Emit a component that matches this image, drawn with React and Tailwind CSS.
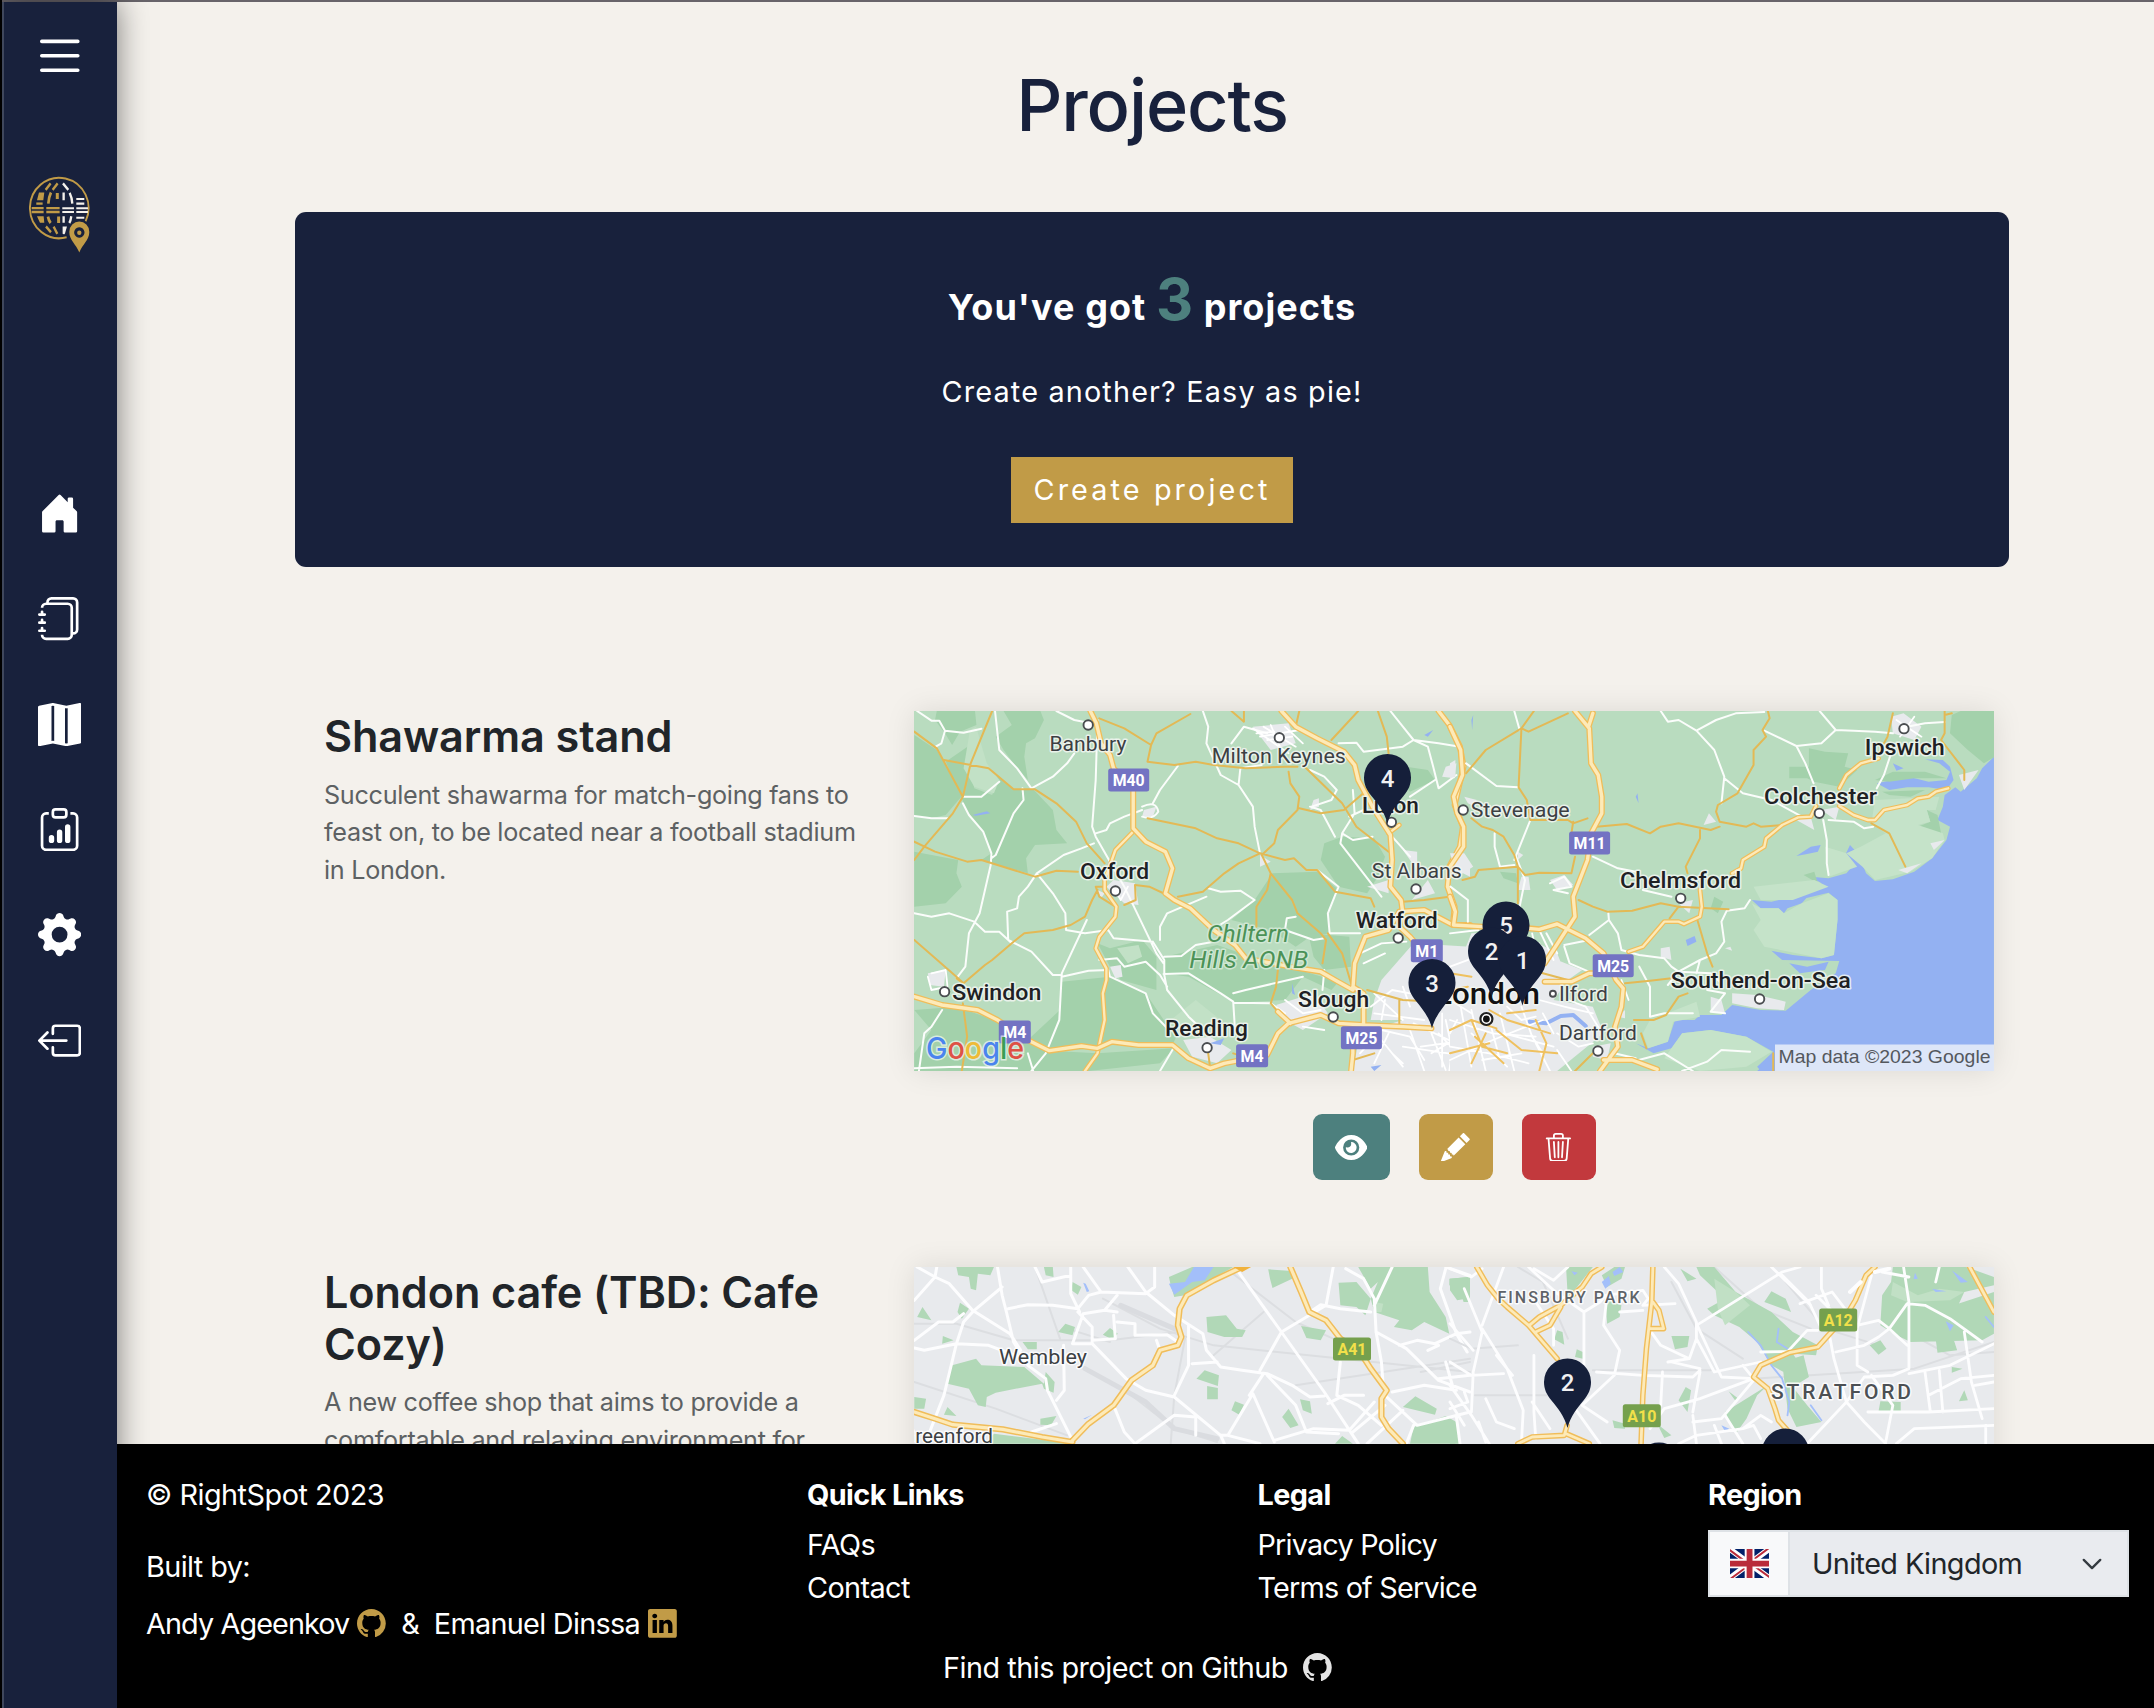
import React from "react";
import {
  BsList,
  BsHouseDoorFill,
  BsJournals,
  BsMapFill,
  BsClipboardData,
  BsGearFill,
  BsBoxArrowLeft,
  BsPencilFill,
  BsTrash3,
  BsGithub,
  BsLinkedin,
} from "react-icons/bs";
import { FaEye } from "react-icons/fa6";

const NAV = [BsHouseDoorFill, BsJournals, BsMapFill, BsClipboardData, BsGearFill, BsBoxArrowLeft];

function Logo() {
  return (
    <svg className="h-[78px] w-[62px]" viewBox="28.7 175 62 78" fill="none">
      <g transform="scale(.33333 .3827)" strokeLinecap="butt">
        <path d="M199 620A88 79 0 1 1 256 578" stroke="#c19b47" strokeWidth="5.5" />
        <g stroke="#c19b47" strokeWidth="6">
          <path d="M94 544H130M94 554H130M138 544H178M138 554H178" />
          <path d="M108 532H127" />
          <path d="M136 496L151 479M157 496L172 479M137 592L152 607M160 592L171 611" strokeWidth="7" />
          <path d="M144 532Q145 516 152 503M143 566Q145 576 151 583" strokeWidth="8" />
          <path d="M171 504V520M175 566V583" strokeWidth="9" />
        </g>
        <path d="M116 503h16l-3 20h-19zM110 565h20l2 17h-13z" fill="#c19b47" />
        <g stroke="#f4f1ec" strokeWidth="7">
          <path d="M186 544H221M186 554H221M228 544H263M228 554H263M228 532H252M228 520H252M228 569H252" strokeWidth="5.5" />
          <path d="M188 479L204 496M190 503V523M208 504Q215 516 216 532M190 565V582M213 565Q211 577 207 583" />
        </g>
        <path d="M187 592h13l-6 18q-3 4-7 1z" fill="#f4f1ec" />
        <path fillRule="evenodd" fill="#c19b47" d="M237 660C228 638 207 628 207 606A30 27 0 0 1 267 606C267 628 246 638 237 660ZM237 594a15.500 13.500 0 1 0 .1 0Z" />
        <ellipse cx="237" cy="608" rx="6.500" ry="6" fill="#c19b47" />
      </g>
    </svg>
  );
}

function Label({ x, y, w, size = 20.5, weight = 400, color = "#3c4043", halo = "#f2f6f2", italic, spaced, children }) {
  return (
    <text
      x={x}
      y={y}
      textAnchor="middle"
      textLength={w}
      lengthAdjust={spaced ? "spacing" : "spacingAndGlyphs"}
      fontFamily="Roboto, sans-serif"
      fontSize={size}
      fontWeight={weight}
      fontStyle={italic ? "italic" : "normal"}
      fill={color}
      stroke={halo}
      strokeWidth="3"
      strokeOpacity=".85"
      strokeLinejoin="round"
      paintOrder="stroke"
    >
      {children}
    </text>
  );
}

function City(props) {
  return <Label size={21.3} weight={500} color="#202124" {...props} />;
}

function Shield({ x, y, w = 41, fill = "#7373c3", color = "#fff", children }) {
  return (
    <g>
      <rect x={x - w / 2} y={y - 11.5} width={w} height="23" rx="2.500" fill={fill} />
      <text x={x} y={y + 5.8} textAnchor="middle" textLength={w - 9} lengthAdjust="spacingAndGlyphs" fontFamily="Roboto, sans-serif" fontSize="16.500" fontWeight="700" fill={color}>
        {children}
      </text>
    </g>
  );
}

function Pin({ x, y, children }) {
  return (
    <g transform={`translate(${x} ${y})`}>
      <path d="M0 0C-3 -12 -10 -20 -16 -27.500C-21 -33.500 -23.500 -39 -23.500 -46A23.500 23.500 0 0 1 23.500 -46C23.500 -39 21 -33.500 16 -27.500C10 -20 3 -12 0 0Z" fill="#151f3a" />
      <text x="0" y="-37" textAnchor="middle" fontFamily="Roboto, sans-serif" fontSize="24" fontWeight="500" fill="#f1f1f3">
        {children}
      </text>
    </g>
  );
}

function Town({ x, y, r = 4.7 }) {
  return <circle cx={x} cy={y} r={r} fill="#fff" stroke="#4a4d50" strokeWidth="1.900" />;
}

function Roads({ d, color, width }) {
  return <path d={d} stroke={color} strokeWidth={width} fill="none" strokeLinejoin="round" strokeLinecap="round" vectorEffect="non-scaling-stroke" />;
}

function Motorway({ d, wide = 6, narrow = 3.4 }) {
  return (
    <>
      <Roads d={d} color="#f0bd5a" width={wide} />
      <Roads d={d} color="#fdeab8" width={narrow} />
    </>
  );
}

const WEST = "translate(-4 -11) scale(.357143 .333333)";
const EAST = "translate(536 -11) scale(.357143 .333333)";

const W_WHITE =
  "M20 33L60 62L82 62L98 92L88 130L72 140M98 92L150 98L200 86M238 33L250 150L300 205L340 265L400 230L440 190L460 160M148 290H200L250 245M12 348L60 355H105M148 310L165 345L205 395L228 460L226 495L195 640L165 700L155 800L130 835M315 265L318 300L290 340L240 465L228 475M525 60L520 240L510 380L520 410L600 560L690 760L710 790M520 400L550 390L560 370L600 350L650 330M750 198L700 270L680 310M650 320Q690 300 695 335Q680 360 650 350M515 430L480 445L430 465L355 520L330 560L305 590L300 625L272 635L275 720L340 755L400 825L420 825M355 520L400 580L435 640L437 690L490 700L555 690L570 715L680 725M410 33L460 60L485 65M820 33L835 80L830 130L870 225L920 255L960 320L965 380L980 460M920 255L925 205L985 195M900 130L935 80L1000 100M495 660L425 820L418 960L380 1060L340 1113M12 640L60 650L110 640L180 665L210 695L250 695L285 730M425 830L500 812L555 810L560 830L660 880L680 940L725 990M530 780L580 775L600 800L660 785L700 825L720 860M680 725L712 780V825L720 870L780 950L810 980M712 770L760 768L800 735L850 725M700 720V680L720 640L830 590M710 822L780 820L870 880L905 905L910 990M905 880L940 870L1060 840L1100 830M905 908L1010 910L1050 940M835 565L870 575L925 572L965 600L890 660L860 680M90 930L60 980L40 1000L25 1113M12 1105L130 1100L300 1105M330 1060L345 1113M1345 33L1380 80L1410 120L1450 140L1465 200L1480 265L1530 225M1200 130L1250 128L1270 155L1380 140L1410 120L1480 130L1540 140M1120 210L1160 230L1195 270L1180 300L1125 320M1240 270L1245 340L1210 400L1240 420L1295 410M1210 400L1205 430L1320 590M1190 410L1150 330L1120 320M1140 510L1200 560L1170 640L1175 700L1260 700M1350 410L1400 470M1080 650L1055 655L1050 690L1130 720L1160 715M1160 810L1155 870M1230 350L1270 330M1470 240L1400 290M740 1040L700 1113";
const W_YELLOW =
  "M230 33L170 190L148 290M12 95L75 145L148 290L120 340L40 440L12 480M95 180L220 205L290 268H350L410 310L465 365L495 430L545 490M12 425L70 455L160 485L200 480L350 530L410 512L470 515M530 55L600 85L675 135L690 100L785 42M675 135L665 185L740 195L800 185L850 195L940 205L1050 200L1085 200M665 355L800 385L860 415L920 430L980 460L1050 480L1075 475L1110 510L1140 510L1190 575L1290 595L1300 620M980 460L920 490L880 520L820 575L750 590M545 560L520 560L530 590L575 620M630 555L670 560L720 585M630 555L632 600L600 615M12 720L130 830L150 850L210 795L230 780L290 725L320 700L400 690L450 675L490 650L510 600L525 570M148 910L160 1010L145 1113M150 850L130 835M1100 195L1210 310L1250 380L1340 455M1060 215L1065 250L1090 290L1085 330L1030 390L1020 430L985 465L1010 520L1000 570L970 620V680M1010 520L1070 600L1085 640L1150 700L1165 720L1155 790M1090 325L1150 340L1215 330L1290 260M1255 33L1180 120M1310 33L1335 110L1340 160M1090 33L1080 80M900 33L935 65V33M1030 810L1025 860L1010 910L1050 960M1280 870L1380 900L1470 905M1370 900V980M1170 700L1210 760L1235 850M1380 605L1440 600L1510 590M1240 1080L1300 1060M835 1060L840 1100M905 1060L935 1070";
const W_MOTOR =
  "M505 33L522 70L535 130L560 165L570 205L625 270V385L660 425L715 455L735 505L715 580L740 600L785 625L825 665L850 690L910 735L940 775L1090 805L1150 815L1190 840L1240 870M1040 33L1080 80L1140 115L1215 155L1245 195L1255 240L1300 330L1345 405L1350 480L1345 560L1375 600L1380 640L1370 680L1400 710L1440 760M1480 33L1510 75L1540 140L1550 200L1525 315L1548 380L1540 440L1510 500L1505 560L1525 620L1520 675L1440 630L1370 635M1240 870L1245 790L1275 710L1340 690L1370 635M1240 860L1270 880V980M12 890L90 915L190 930L245 960L330 1020L390 1052L480 1038L525 1045L565 1025L640 1035L735 1035L780 1075L840 1105L880 1090L1000 1065L1030 1000L1060 970L1150 945L1200 970L1270 975L1380 980L1460 985M1030 935L1065 970M1240 1010V1060L1235 1113M1520 675H1568";
const W_MID = "M625 395L575 450L562 490L545 540L545 570L578 620L575 650L530 710L520 745L550 805V840L540 880L545 960L525 1060L490 1113M1340 400L1370 375";
const W_STREETS =
  "M960 85L1060 160M980 110L1090 90M1010 75L1040 150M990 80L1080 140M1000 120L1070 110M970 100L1020 95M1050 80L1100 130M1260 760L1320 730L1390 725M1270 790L1330 760M1300 880L1380 960M1290 920L1350 870L1400 880M1330 900L1320 960M1380 860L1400 920M1300 940L1440 960M1260 1060L1320 990L1400 1010L1440 1080M1320 1020L1380 1100M1340 1000L1300 1090M1400 990L1440 1113M1460 1000L1500 1110M1480 1000L1568 1100M1500 960L1520 1060L1568 1080M1568 990L1460 1060M1430 1040L1568 1020M1530 960L1510 1113M1380 1040L1568 1070M1050 900L1100 940L1150 930M1100 980L1160 990M60 820L100 810L105 860L60 870L50 830M570 560L590 600L610 560M1350 1060L1380 1090M1410 970L1568 1050M1490 940V1100M1540 930L1560 1100";

const E_WHITE =
  "M180 33L195 90M45 190L130 258L190 262M225 360L195 440L180 480M125 400V440L140 500L180 495M185 470L210 540L195 620M400 470L470 505L520 515M590 33L610 65L640 60L690 92L745 60L800 40L880 36M690 92L740 150L768 230L760 310M768 235L820 280L900 300L985 350M1035 33L1080 90L1130 92L1190 95L1240 100M1080 90L1040 130L970 138L880 92M970 138L995 190L1018 250M1195 265L1215 225L1235 160M1280 80L1330 70L1385 66M1045 360L1055 420V490L1060 525M1060 360L1130 365L1160 385L1185 380M540 570L620 590M840 600L825 625L775 632L760 665L768 725L745 760L700 780L640 815L610 855M700 780L690 820M443 635L445 660L470 700L480 750L530 765L600 775L620 800L640 815L730 820L760 850M445 660L390 705M320 740L335 790L400 820M530 800L560 860V950M560 950L600 940H680M720 870L770 880L730 935L770 940M1 560L50 600V665M280 550L320 530L340 560L290 570L330 580M390 720L320 735M510 1085L600 1060L680 1113M840 1055L760 1050L720 1085L650 1113M460 1060L520 1075M250 730L230 800M270 700L300 760";
const E_YELLOW =
  "M235 33L200 85L220 95L330 40M200 85L100 150L45 220M200 85L192 262L215 300L225 360M60 355L90 380L120 390L150 410L180 465L190 500L80 510L70 530L35 540M190 500L190 610M190 500L210 525L250 518L340 520L350 470M225 360H330L345 370L385 355M345 365L340 400M410 380L495 372L560 400L590 380L640 370L730 390L755 380M745 335L755 365L830 380L850 370L870 380L930 375M890 33L895 55L875 90L885 110L850 150V195L805 280L750 315L745 335M700 390V415L660 500L665 520M360 600L400 620L440 635L510 632L590 610L640 620L780 628M640 620L615 655M690 650L720 760L735 800M1180 370L1230 400L1275 500M1240 40L1225 110L1200 160M1385 33V100L1375 120L1440 210V240M1405 40L1385 45M490 850L560 842L620 835M665 880L640 890L605 945L570 960L515 960M535 1000L550 1045M220 800L260 820L330 840M905 1060V1113M400 1060L350 1113";
const E_MOTOR =
  "M350 33L390 85L395 190L415 225L425 290V340L395 400L385 480L345 590L350 650L265 790M400 40L388 80M0 80L30 150L35 225L10 290L20 340L38 380V440L0 500M0 590L15 635L10 675L90 680M220 685L250 688L300 672L380 715L430 760L465 840L485 865L480 920L462 980M462 980L470 1040L420 1113M430 1080H510L580 1108M265 845L340 845L390 820L420 820";
const E_MID =
  "M500 755L540 740L600 665H640L655 672L700 650L705 620L700 570M790 520L815 505L820 480L880 440L885 415L930 375L975 352L1010 350L1025 318M1090 265L1110 225L1150 190L1200 175M1090 318L1130 345L1170 360H1190L1215 330L1280 315L1310 295L1340 290L1360 275L1395 265";
const E_STREETS =
  "M0 700L80 690M0 800L100 760M230 700L250 800M250 690L290 780M0 900L60 940M0 960L120 1000L240 1010M30 920L60 1100M60 930L100 1113M0 1040L110 1060L220 1090M110 960L140 1080M140 940L180 1113M0 1080L120 1020L260 960M200 920L230 1010L260 1060M150 1000L290 1040M60 1000L160 1100M250 900L320 920L400 940M260 940L290 1000M330 900L380 920L420 990M300 1000L360 1040L400 1030M300 1050L340 1113M240 1030L280 1113M20 960L0 1000M160 920L200 960L240 950M90 1080L200 1060M1250 60L1320 110M1260 110L1300 50M480 840L500 900";

function BritainMap() {
  return (
    <svg className="block h-full w-full" viewBox="0 0 1080 360">
      <rect width="1080" height="360" fill="#b9dcbf" />
      <g transform={WEST}>
        <g fill="#a3d1ab">
          <path d="M75 33H182L186 75L140 95L118 135L98 100L70 60Z" />
          <path d="M12 105L75 150L148 285L100 345L60 355L12 350Z" />
          <path d="M100 185L175 130L165 190L180 265L230 285L245 245L220 205L290 268H345L400 330L410 390L440 430L350 435L325 475L330 520L200 480L228 460L205 395L165 345Z" />
          <path d="M262 33H365L375 60L350 115L325 130L320 170L330 240L290 190L262 150L240 110L285 75Z" />
          <path d="M12 455L135 480L130 520L145 560L100 610L12 620Z" />
          <path d="M425 845L560 830L660 880L720 975L750 1000L735 1035L560 1025L525 1045L400 1052L330 1020L420 930Z" />
          <path d="M12 930L130 920L250 965L390 1052L525 1060L740 1045L700 1090L500 1113H12V1060L60 990Z" />
          <path d="M712 770L860 735L980 780L1090 810L1200 845L1180 870L1100 830L1050 900L910 908L780 830L712 820Z" />
          <path d="M965 600L1015 520L1140 515L1200 570L1170 640L1175 700L1120 710L1080 740L1010 690L900 660Z" />
          <path d="M525 730L560 745L650 720L690 770V870L590 840L560 800Z" />
          <path d="M1160 430L1210 410L1300 415L1330 470L1310 530L1280 580L1200 560L1150 480Z" />
          <path d="M1390 200L1450 210L1470 240L1400 275L1380 250Z" />
          <path d="M1115 700L1230 710L1235 800L1160 810L1130 770Z" />
        </g>
        <g fill="#c2e1c6">
          <path d="M168 90L185 80L215 190L250 240L235 280L180 260L150 205Z" />
          <path d="M580 745L640 735L650 770L610 790ZM730 960L800 900L870 960L800 1000Z" />
        </g>
        <g fill="#e8eaed">
          <path d="M570 540L630 550L640 615L600 610L550 560ZM525 570L545 580L535 595Z" />
          <path d="M960 80L1060 70L1080 130L1010 150ZM1500 200L1530 190L1525 235L1490 230Z" />
          <path d="M1320 840L1410 730L1568 740V1113H1240L1260 1000L1380 960L1290 960L1300 900Z" />
          <path d="M1380 450L1420 455V510ZM1280 560L1340 540V580ZM1405 600L1450 540L1470 580ZM1025 915L1130 880L1170 940L1100 990L1050 960ZM765 1020L840 1010L900 1050L860 1090L790 1070ZM50 820L100 810L95 860L55 855ZM560 800L590 795L595 830L575 835ZM655 330L690 320L680 350L650 350ZM980 465L1010 485L980 500ZM1130 300L1145 295V320L1120 330ZM1540 460L1568 500V530L1530 510Z" />
        </g>
        <g fill="#93b1f2">
          <path d="M175 345L215 334L225 340L185 347ZM1440 105L1465 90L1450 110ZM840 1030L880 1015L870 1035ZM1290 1100L1320 1095L1300 1113ZM1070 850L1078 885L1070 880Z" />
        </g>
        <Roads d={W_WHITE} color="#fbfdfb" width="2" />
        <Roads d={W_STREETS} color="#fff" width="1.800" />
        <Roads d={W_YELLOW} color="#e3b955" width="2" />
        <Motorway d={W_MID} wide={4.8} narrow={2.4} />
        <Motorway d={W_MOTOR} />
      </g>
      <g transform={EAST}>
        <g fill="#93b1f2">
          <path d="M1523 170L1490 205L1475 235L1430 275L1415 262L1385 285L1380 320L1365 360L1400 380L1390 420L1350 475L1300 515L1240 538L1190 543L1165 520L1150 480L1130 495L1110 520L1060 535L1010 530L1040 550L1010 575L960 585L975 600L1060 578L1085 600V660L1075 765L1040 775L960 765L900 752L930 780L1090 783L1080 820L1010 870L940 932L870 930L790 915L760 945L700 945L685 960H630L610 1025L555 1045L520 1030L570 1060L620 1045L650 1000L730 990L830 1010L905 1055L860 1100L870 1113H1523Z" />
          <path d="M1195 250L1240 240L1290 232L1340 245L1390 240L1400 215L1370 190L1330 178L1380 180L1400 200L1410 240L1390 270L1340 262L1280 262L1230 270Z" />
          <path d="M845 600L900 605L960 590L1010 580L985 610L945 625L935 640L920 625L870 625ZM970 468L1010 440L1038 435L1030 455L1000 462ZM1060 485L1100 480L1120 435L1150 470L1135 500L1110 490ZM660 720L685 708L690 725L665 738ZM520 290L525 280L528 310ZM60 60L65 45L62 90ZM1425 40L1445 75L1435 80ZM1240 190L1270 205L1250 212ZM222 960L270 965L310 945L345 942L385 975L375 985L330 958L300 975L250 980ZM950 790L1000 800L1060 785L1050 810L1010 815L980 820ZM860 1113L900 1075L920 1113Z" />
        </g>
        <g fill="#a3d1ab">
          <path d="M1405 45L1430 33H1523V172L1495 190L1450 150L1400 100Z" />
          <path d="M1005 145L1050 155L1115 160L1105 200L1140 210L1090 260L1020 245L1000 235L950 235V200L1005 200Z" />
          <path d="M1190 240L1240 215L1330 215L1390 235L1300 235L1230 245ZM1210 275L1330 270L1290 290L1230 285ZM1335 330L1365 345L1375 400L1310 380L1345 365ZM740 590L765 605L750 640L730 625ZM140 515L185 520L190 550L150 535ZM990 525L1020 515L1030 550ZM640 1010L665 1020L645 1040Z" />
        </g>
        <g fill="#c5e3c9">
          <path d="M1190 300L1370 290L1360 330L1335 330L1345 365L1310 375L1380 400L1385 420L1350 475L1290 515L1190 540L1155 500L1110 460L1150 440L1220 400L1180 370Z" />
          <path d="M845 610L870 625L920 625L935 640L985 610L1060 580L1085 600V660L1075 765L1040 775L880 740L850 690L870 660ZM625 965L700 950L690 905L560 960L540 1000L555 1045L610 1025ZM650 1000L730 990L830 1010L900 1055L830 1100L700 1113L600 1075Z" />
          <path d="M850 560L1020 540L1060 560L960 600L870 600ZM1050 440L1110 460L1140 500L1060 530Z" />
        </g>
        <g fill="#e8eaed">
          <path d="M0 860L60 700L130 700L230 720L300 760L330 840L290 900L400 920L430 1000L300 1113H0ZM260 800L300 780L370 810L330 840ZM0 460L40 460L65 500L20 530ZM0 190L15 180V230L0 235Z" />
          <path d="M790 880L860 885L940 905L935 930L860 925L790 910ZM730 890L760 900L770 940L730 935ZM970 360L1010 350L1020 390ZM1040 330L1090 320L1080 360ZM1235 50L1270 40L1320 80L1300 120L1240 100ZM1425 225L1480 210L1440 270ZM1345 430L1385 420L1355 450ZM1255 510L1320 490L1280 520ZM725 340L745 365L710 375ZM190 455L205 465L190 480ZM200 530L220 530L225 570L190 570ZM590 745L615 740L620 780L590 770ZM770 745L785 740L790 752ZM640 610L680 600L670 640ZM280 540L320 525L345 555L300 570ZM470 950L490 930V955ZM400 1040L450 1030L440 1080L400 1070ZM40 290L75 300L70 320L50 310Z" />
        </g>
        <Roads d="M222 965L270 970L310 948L345 945L380 978" color="#93b1f2" width="4" />
        <Roads d={E_WHITE} color="#fbfdfb" width="2" />
        <Roads d={E_STREETS} color="#fff" width="1.800" />
        <Roads d={E_YELLOW} color="#e3b955" width="2" />
        <Roads d="M0 820L60 830M0 870L50 860M0 990L60 960L130 985M60 960L90 1040L160 1060M0 1060L110 1030M110 930L160 960L280 1000M240 960L270 1030L250 1113M160 940L240 930M100 1000L60 1090M130 990L200 1050L300 1060M70 1010L150 1090" color="#efc15f" width="2" />
        <Motorway d={E_MID} wide={4.800} narrow={2.400} />
        <Motorway d={E_MOTOR} />
      </g>

      <Town x={174.200} y={14} />
      <Town x={365.300} y={26.700} />
      <Town x={477.400} y={111.300} />
      <Town x={201.400} y={180} />
      <Town x={502} y={178} />
      <Town x={484.200} y={227} />
      <Town x={30.600} y={280.700} />
      <Town x={419.200} y={306} />
      <Town x={293.100} y={336.700} />
      <Town x={549.200} y={99} />
      <Town x={990} y={17.700} />
      <Town x={905.300} y={102.300} />
      <Town x={766.700} y={187.300} />
      <Town x={845.600} y={288} />
      <Town x={683.900} y={340} />
      <Town x={638.900} y={282.700} r={3} />
      <circle cx="572.400" cy="308" r="6" fill="#fff" stroke="#222" strokeWidth="2.200" />
      <circle cx="572.400" cy="308" r="3.400" fill="#111" />

      <Shield x={214.700} y={69}>M40</Shield>
      <Shield x={100.800} y={321} w={32}>M4</Shield>
      <Shield x={338.100} y={344.700} w={32}>M4</Shield>
      <Shield x={447.400} y={326.700}>M25</Shield>
      <Shield x={512.800} y={239.700} w={32}>M1</Shield>
      <Shield x={675.600} y={132}>M11</Shield>
      <Shield x={699.200} y={254.700}>M25</Shield>

      <Label x={173.900} y={39.500} w={77}>Banbury</Label>
      <Label x={364.800} y={52.300} w={134}>Milton Keynes</Label>
      <City x={476.400} y={101.700} w={57}>Luton</City>
      <City x={200.600} y={168.300} w={69}>Oxford</City>
      <Label x={502.800} y={167.300} w={90}>St Albans</Label>
      <City x={482.800} y={216.700} w={82}>Watford</City>
      <Label x={334} y={230.700} w={82} size={24} italic color="#4b9257" halo="#d5ead8">Chiltern</Label>
      <Label x={334.700} y={256.700} w={119} size={24} italic color="#4b9257" halo="#d5ead8">Hills AONB</Label>
      <City x={82.800} y={288.500} w={89}>Swindon</City>
      <City x={419.600} y={295.700} w={71}>Slough</City>
      <City x={292.400} y={324.500} w={83}>Reading</City>
      <City x={990.800} y={43.700} w={80}>Ipswich</City>
      <City x={906.500} y={92.500} w={113}>Colchester</City>
      <Label x={606.200} y={105.500} w={99}>Stevenage</Label>
      <City x={766.500} y={177.300} w={121}>Chelmsford</City>
      <City x={846.700} y={277} w={180}>Southend-on-Sea</City>
      <Label x={669.400} y={289.500} w={49}>Ilford</Label>
      <Label x={683.900} y={329} w={78}>Dartford</Label>
      <Label x={573.500} y={293} w={105} size={29} weight={500} color="#111">London</Label>

      <Pin x={592} y={260}>5</Pin>
      <Pin x={577.500} y={286}>2</Pin>
      <Pin x={608.500} y={294.500}>1</Pin>
      <Pin x={473.500} y={112.500}>4</Pin>
      <Pin x={518} y={317.500}>3</Pin>

      <text x="12" y="347.500" textLength="98" lengthAdjust="spacingAndGlyphs" fontFamily="Inter, sans-serif" fontSize="30" fontWeight="500" stroke="#fff" strokeWidth="3" strokeOpacity=".6" paintOrder="stroke">
        <tspan fill="#4a84ee">G</tspan>
        <tspan fill="#de5246">o</tspan>
        <tspan fill="#eebb36">o</tspan>
        <tspan fill="#4a84ee">g</tspan>
        <tspan fill="#3a9e55">l</tspan>
        <tspan fill="#de5246">e</tspan>
      </text>
      <rect x="861" y="333.500" width="219" height="26.500" fill="#f5f7fa" fillOpacity=".76" />
      <text x="864.500" y="352" textLength="212" lengthAdjust="spacingAndGlyphs" fontFamily="Liberation Sans, sans-serif" fontSize="19" fill="#54585e">
        Map data ©2023 Google
      </text>
    </svg>
  );
}

const CITY_W = "translate(-4 -5) scale(.357143 .333333)";
const CITY_E = "translate(536 -5) scale(.357143 .333333)";

function CityMap() {
  return (
    <svg className="block h-full w-full" viewBox="0 0 1080 360">
      <rect width="1080" height="360" fill="#e8eaed" />
      <g transform={CITY_W}>
        <Roads d="M12 185L130 185L290 235L560 235L750 210M350 15L420 230M540 110L700 200L850 250L1568 330M480 310L620 400L740 500L860 540M12 360L240 440L440 520M880 15L1080 180L1185 230M740 400L730 545M770 230L740 400M1080 370L1568 290M990 150L850 280M440 200L560 240M1430 330L1568 300" color="#dcdee1" width="2" />
        <Roads d="M490 320L660 420L740 500L860 530M590 130L740 200" color="#dadce0" width="5" />
        <g fill="#b1d8b7">
          <path d="M130 15H235L225 40L190 35L185 85L170 80L165 45L135 40ZM375 15H400L402 45L380 40ZM455 60L480 75L470 98L452 85ZM140 122L165 140L145 170L133 150ZM35 135L60 175L20 165ZM92 222L122 235L90 245ZM315 240H355V262H330ZM435 185L462 195L455 220L415 210ZM560 198L582 215L565 232L540 218Z" />
          <path d="M118 310L185 290L200 310L320 315L375 365L380 330L405 360L402 392L375 380L370 365L240 392L215 405L212 435L190 430L165 380L105 365Z" />
          <path d="M365 470L410 462L395 490L365 488ZM105 435L130 462L95 458ZM12 405L45 410L40 440H12ZM235 515L460 545H210Z" />
          <path d="M830 165L885 160L915 200L940 205L930 225L880 225L833 210ZM825 325L865 340L862 372L802 350ZM832 372L862 378V412H832ZM910 418L935 428L922 458L900 445ZM1060 440L1088 490L1065 498L1042 465ZM1092 412L1120 418L1125 455L1100 445ZM1095 192L1165 205L1150 235L1110 228Z" />
          <path d="M1003 22L1078 28L1070 50L1015 78L1008 50ZM725 45L790 15H905L770 100L740 105L730 70ZM1200 62L1250 60L1290 110L1275 160L1250 135L1205 130ZM1345 15H1450L1455 90L1500 165L1510 215L1440 180L1405 205L1355 195L1370 175L1300 150L1290 110L1310 60ZM1255 15H1345L1310 60L1290 80ZM1510 50L1568 45V120L1550 120L1540 85L1510 70ZM1415 403L1475 440L1470 458L1380 435ZM1400 545L1410 495L1500 462L1530 480L1540 545ZM1210 522L1240 545H1190Z" />
        </g>
        <path d="M1300 120L1325 125L1320 150L1300 150Z" fill="#c1e0c5" />
        <g fill="#a3bffa">
          <path d="M795 15H850L825 55L790 60L740 98L725 65L770 60ZM485 62L492 65L502 88L495 90ZM485 470L510 458L490 472Z" />
        </g>
        <Roads d="M20 15L70 45L110 65L175 145L280 215L310 265M75 15L70 45L12 115M245 15L258 100L270 150L290 240L330 310L380 350L385 385L455 535M12 235L80 180L120 180L150 155M258 75L180 145L150 180L130 245L95 400L55 510M12 258L40 265L130 245L220 250L320 290M275 140L330 128L400 130L470 140L500 100L535 90L660 95L685 75V15M450 15V95L475 150M350 15L370 60L450 40M485 15L535 90M610 15L660 90L740 160L820 215L830 265L870 315L930 325L1000 335L1070 370L1120 405L1160 402M580 100L545 145L485 155L455 245L510 245L605 350L660 385L740 405L870 520L880 545M470 150L510 195V245M545 145L580 150M570 160L575 230L510 235M580 180L630 185V220L720 218L750 240M690 235L700 265M430 250L432 385L410 415M780 190V310L740 400M790 305L860 300M910 15L1040 210L1160 390L1255 545M1185 15L1165 130L1040 210L980 325M1205 300L1195 400L1255 430L1320 490M1120 150L1150 128L1205 140L1290 150M1220 20L1270 50L1300 110L1305 210L1320 300L1325 370M1350 15L1300 130M1305 210L1390 260L1480 355L1568 390M1370 250L1420 235L1470 245L1530 215L1568 210M1480 250L1450 265M1500 20L1485 80L1530 215L1560 270M1480 350L1568 340M1520 375L1500 300M570 430L600 510L630 545L740 460L800 465L800 520M870 520L890 520L960 395L1020 540M890 520L980 545M990 335L950 400M1000 340L1080 430L1110 510L1200 515M1020 535L1130 500L1230 505L1300 420M1170 425L1215 400L1270 400M1240 510L1330 430M1280 545L1380 445M1330 400L1420 490L1568 450M1390 545L1410 490M1530 465L1540 545M1350 390L1440 370L1530 385M410 485L340 510M1500 15L1568 40" color="#fdfdfe" width="3" />
        <Motorway d="M12 450L70 470L120 488L260 502L370 525L455 540M455 535L500 485L570 430L620 355L680 310L700 265L750 250L760 225L750 190L755 140L775 100L850 55L930 15M1065 15L1095 90L1118 150L1165 175L1205 230L1260 270L1290 320L1335 385L1320 410V465L1340 500L1380 545" wide={6.200} narrow={3.200} />
        <path d="M905 15H955L930 30Z" fill="#f1b23c" />
      </g>
      <g transform={CITY_E}>
        <Roads d="M740 15L870 140L1010 200M400 325L730 325M850 350L1300 320L1523 240M190 15L260 60L330 230M620 60L690 200L820 290M0 230L60 260L190 250M70 400L270 400M940 60L1050 200L1200 250M1280 210L1400 280L1523 270" color="#dcdee1" width="2" />
        <g fill="#b1d8b7">
          <path d="M0 50L50 45L45 110L20 115L0 85ZM325 15H400L330 110ZM435 110L480 130L475 165L440 185ZM300 205L315 210L320 248L292 232ZM355 262L372 270V290L350 285ZM620 222H670L665 255L630 262ZM645 20L690 50L665 58ZM660 375L675 385L665 450L640 415ZM580 485L620 520L600 528ZM455 475L490 485V500L460 498ZM780 388L808 410L800 418ZM0 470L20 520L15 545H0ZM425 40L460 15H490L480 50L440 75Z" />
          <path d="M690 15H740L800 90L900 150L960 210L1030 250L1025 280L960 275L1000 340L960 345L900 310L860 240L810 195L740 160L720 140L770 110L700 40ZM900 88L940 110L955 150L880 120ZM890 370L860 400L830 470L800 515L770 450ZM930 300L990 280L1005 345L960 375L1000 430L1040 480L970 495L945 440Z" />
          <path d="M1240 15H1445L1523 45V70L1440 90L1410 160L1440 190L1523 200V215L1490 235L1290 240L1250 220L1205 190L1210 100L1235 60ZM1360 232H1410L1420 265L1365 272ZM1205 235L1222 260L1200 278L1175 250ZM1410 130L1523 90V215L1440 200L1410 180ZM1205 418L1262 420V452L1200 448ZM1440 385L1450 415L1425 418ZM1405 315L1435 320L1405 332Z" />
        </g>
        <path d="M740 50L800 90L840 130L770 190L750 140ZM1240 60L1310 100L1370 80L1440 90L1400 115L1280 120L1235 100Z" fill="#c1e0c5" />
        <g fill="#a3bffa">
          <path d="M340 28L358 32L348 40ZM425 60L445 42L450 65L435 80ZM455 30L475 15L485 30L460 42ZM1302 32L1310 50L1298 52ZM1405 25L1450 60L1430 62ZM1350 80L1390 88L1360 90ZM1388 178L1410 190L1400 208ZM760 490L782 500L770 508Z" />
        </g>
        <Roads d="M835 210L870 250L900 310L930 350M920 200L915 240L945 260M930 350L950 420L945 460M1010 430L1040 475M1500 165L1523 195" color="#a3bffa" width="1.800" />
        <Roads d="M0 20L60 45L90 20M40 80L90 210L65 330L60 450M0 185L65 265M90 200L160 320L205 445L200 545M60 340L150 335M130 280L175 340M150 15L90 190M220 15L295 90L375 150V320M235 20L290 55L330 15M240 120L290 200V250M235 280V450L240 530M375 150L420 120L435 100L540 85L555 110L540 130L630 125M440 100L430 190L475 265L460 340L370 430M410 330L540 340L680 345L700 325M475 150L540 145M600 15L640 65L690 180V230L670 290L590 250L560 205M670 290L610 300M690 190L930 30L980 15M690 185L760 345L850 350M690 230L740 330L870 300M930 40L1005 120L1040 200M900 15L1010 130M980 125L1070 90L1120 160M1040 15V80L1060 130M1025 100L1120 200M1180 40L1160 120L1140 200V310L1170 330M1060 205L1075 290L1110 420L1160 480L1220 545M1080 270L1160 250L1200 225L1230 200L1280 125L1330 130L1400 170L1490 240M1270 15L1285 120V320L1240 340L1160 345L1110 420L1000 545M1140 190L1200 175L1230 200L1280 250M1523 245L1400 310L1285 335M1440 210L1460 360L1490 470M1210 30L1285 45M1370 15L1360 60M1330 330L1345 450M1370 325L1380 450M1170 450H1340L1523 440M1180 340L1240 430L1220 540M940 275L1000 205L1030 205M870 270L950 268M820 310L850 350L700 410L600 440L560 500M850 355L760 470L680 480M640 545L690 520L820 500L870 460L900 480M680 460L690 545M740 490L760 545M590 430L595 330M700 330L680 450M620 300L700 320M820 500L850 490L870 530M770 460L820 545M350 440L420 545M370 430L440 480M230 420L280 500M100 410L130 480L180 500M0 370L60 460L110 545M0 420L40 490M40 390L50 420L0 440M80 480L100 540M0 300L60 340M1250 545L1300 500L1523 490M1340 400L1430 350L1523 340M1500 490V545M1523 360L1470 370" color="#fdfdfe" width="2.800" />
        <Motorway d="M75 15L105 70L135 110L160 135L220 190L300 290M425 15L395 35L370 75L310 130L250 165L222 190M310 135L280 190L240 210M568 15L565 120L550 260L540 400L535 545M568 120L585 145L598 200H562M1190 15L1165 40L1135 115L1110 160L1055 225L1030 255L950 272L870 310L850 345L890 380L910 440L920 475L945 505M1455 15L1523 150M328 490L320 520L230 525L190 545M325 515L390 545" wide={5.600} narrow={2.800} />
        <Roads d="M1190 30L1230 20M1120 90L1150 60" color="#fdfdfe" width="4" />
      </g>

      <Shield x={438} y={82} w={38} fill="#75a04d" color="#f2e04a">A41</Shield>
      <Shield x={924.200} y={53} w={38} fill="#75a04d" color="#f2e04a">A12</Shield>
      <Shield x={727.800} y={148.700} w={38} fill="#75a04d" color="#f2e04a">A10</Shield>
      <Label x={129} y={96.700} w={88} size={21} halo="#fff">Wembley</Label>
      <Label x={33} y={176} w={92} size={21} halo="#fff">Greenford</Label>
      <Label x={654.500} y={36} w={142} size={16} color="#5f6368" weight={500} halo="#fff" spaced>FINSBURY PARK</Label>
      <Label x={927} y={131.700} w={140} size={21} color="#4c5054" weight={500} halo="#fff" spaced>STRATFORD</Label>
      <Pin x={745} y={245} />
      <Pin x={653.500} y={161}>2</Pin>
      <Pin x={871.400} y={231}>4</Pin>
    </svg>
  );
}

function UnionJack() {
  return (
    <svg className="h-[29px] w-[39px]" viewBox="0 0 640 480" preserveAspectRatio="none">
      <path fill="#012169" d="M0 0h640v480H0z" />
      <path fill="#fff" d="m75 0 244 181L562 0h78v62L400 241l240 178v61h-80L320 301 81 480H0v-60l239-178L0 64V0z" />
      <path fill="#b92c3a" d="m424 281 216 159v40L369 281zm-184 20 6 35L54 480H0zM640 0v3L391 191l2-44L590 0zM0 0l239 176h-60L0 42z" />
      <path fill="#fff" d="M241 0v480h160V0zM0 160v160h640V160z" />
      <path fill="#b92c3a" d="M0 193v96h640v-96zM273 0v480h96V0z" />
    </svg>
  );
}

function Project({ title, text, map }) {
  return (
    <section className="flex pl-[29px]">
      <div className="w-[590px] shrink-0">
        <h2 className="mb-[13.800px] whitespace-nowrap text-[43.200px] font-[560] leading-[51.840px] tracking-[-0.100px] text-[#212529]">
          {title.map((line) => (
            <span key={line} className="block">{line}</span>
          ))}
        </h2>
        <p className="whitespace-nowrap text-[25.200px] leading-[37.800px] tracking-[-0.290px] text-[#5d6163]">
          {text.map((line) => (
            <span key={line} className="block">{line}</span>
          ))}
        </p>
      </div>
      <div className="w-[1080px] shrink-0">
        <div className="h-[360px] shadow-[0_0_28px_rgba(0,0,0,0.1)]">{map}</div>
        <div className="mt-[43px] flex justify-center gap-[29px]">
          <button className="flex h-[66px] w-[77px] items-center justify-center rounded-[9px] bg-[#4d807e] text-white">
            <FaEye className="h-[29px] w-[32.400px]" />
          </button>
          <button className="flex h-[66px] w-[74px] items-center justify-center rounded-[9px] bg-[#c19b47] text-white">
            <BsPencilFill className="size-[28.800px]" />
          </button>
          <button className="flex h-[66px] w-[74px] items-center justify-center rounded-[9px] bg-[#c2393d] text-white">
            <BsTrash3 className="size-[28.800px]" />
          </button>
        </div>
      </div>
    </section>
  );
}

export default function App() {
  return (
    <div className="flex h-[1708px] w-[2154px] flex-col overflow-hidden border-l-2 border-black bg-[#f4f1ec] font-['Inter',sans-serif]">
      <div className="h-[2px] shrink-0 bg-[#68646a]" />
      <div className="flex min-h-0 flex-1">
        <aside className="relative z-10 flex w-[115px] shrink-0 flex-col items-center border-l-2 border-[#3f475c] bg-[#18213c] pr-[2px] text-white shadow-[0_0_29px_rgba(0,0,0,0.5)]">
          <BsList className="mt-[25px] size-[57.600px]" />
          <div className="mt-[90px]">
            <Logo />
          </div>
          <nav className="mt-[208.500px] flex flex-col items-center">
            {NAV.map((Icon, i) => (
              <a key={i} className="flex h-[105.300px] w-[111px] items-center justify-center">
                <Icon className="size-[43.200px]" />
              </a>
            ))}
          </nav>
        </aside>

        <div className="flex min-w-0 flex-1 flex-col">
          <main className="min-h-0 flex-1 overflow-hidden pl-[178px]">
            <div className="w-[1714px]">
              <h1 className="mt-[60px] text-center text-[72px] font-[540] leading-[86.400px] tracking-[-1.150px] text-[#18213c]">Projects</h1>
              <div className="mt-[63.600px] flex h-[355px] flex-col items-center rounded-[11px] bg-[#18213c] pt-[58.500px] text-white">
                <h3 className="h-[71px] text-[36px] font-bold leading-[69px] tracking-[1.050px]">
                  You've got <span className="text-[57.600px] leading-none text-[#4d807e]">3</span> projects
                </h3>
                <p className="mt-[28.500px] text-[28.800px] leading-[43.200px] tracking-[1.170px]">Create another? Easy as pie!</p>
                <button className="mt-[43.500px] flex h-[66px] w-[282px] items-center justify-center bg-[#c19b47] pb-[1px] text-[28.800px] tracking-[3.100px]">
                  Create project
                </button>
              </div>
              <div className="mt-[144px] flex flex-col gap-[87px]">
                <Project
                  title={["Shawarma stand"]}
                  text={["Succulent shawarma for match-going fans to", "feast on, to be located near a football stadium", "in London."]}
                  map={<BritainMap />}
                />
                <Project
                  title={["London cafe (TBD: Cafe", "Cozy)"]}
                  text={["A new coffee shop that aims to provide a", "comfortable and relaxing environment for"]}
                  map={<CityMap />}
                />
              </div>
            </div>
          </main>

          <footer className="relative z-20 flex h-[264px] shrink-0 flex-col bg-black pl-[29px] pt-[29px] text-[28.800px] leading-[43.200px] tracking-[-0.600px] text-white">
            <div className="flex h-[173px]">
              <div className="w-[661px]">
                <p className="tracking-[-0.500px]">© RightSpot 2023</p>
                <p className="mt-[28.800px]">Built by:</p>
                <p className="mt-[14px] flex items-center whitespace-nowrap tracking-[-0.900px]">
                  Andy Ageenkov
                  <BsGithub className="ml-[8px] size-[28.800px] text-[#c19b47]" />
                  <span className="mx-[15px]">&amp;</span>
                  <span className="tracking-[-0.700px]">Emanuel Dinssa</span>
                  <BsLinkedin className="ml-[8px] size-[28.800px] text-[#c19b47]" />
                </p>
              </div>
              <div className="w-[450.500px]">
                <h4 className="mb-[7px] font-bold">Quick Links</h4>
                <p>FAQs</p>
                <p>Contact</p>
              </div>
              <div className="w-[450.500px] tracking-[-0.800px]">
                <h4 className="mb-[7px] font-bold tracking-[-0.600px]">Legal</h4>
                <p>Privacy Policy</p>
                <p>Terms of Service</p>
              </div>
              <div>
                <h4 className="font-bold">Region</h4>
                <div className="mt-[13.800px] flex h-[67px] w-[421px] border-2 border-[#dee2e6] bg-[#e9ebef] text-[#212529]">
                  <div className="flex w-[80px] items-center justify-center border-r-2 border-[#dee2e6] bg-[#f8f9fa]">
                    <UnionJack />
                  </div>
                  <span className="flex-1 self-center pl-[22px]">United Kingdom</span>
                  <svg className="mr-[24px] w-[22px] self-center" viewBox="0 0 16 16" fill="none" stroke="#343a40" strokeWidth="1.700" strokeLinecap="round" strokeLinejoin="round">
                    <path d="m2 5 6 6 6-6" />
                  </svg>
                </div>
              </div>
            </div>
            <div className="flex items-center pl-[797px] tracking-[-0.500px]">
              Find this project on Github
              <BsGithub className="ml-[15px] size-[28.800px] text-[#e4e4e4]" />
            </div>
          </footer>
        </div>
      </div>
    </div>
  );
}
